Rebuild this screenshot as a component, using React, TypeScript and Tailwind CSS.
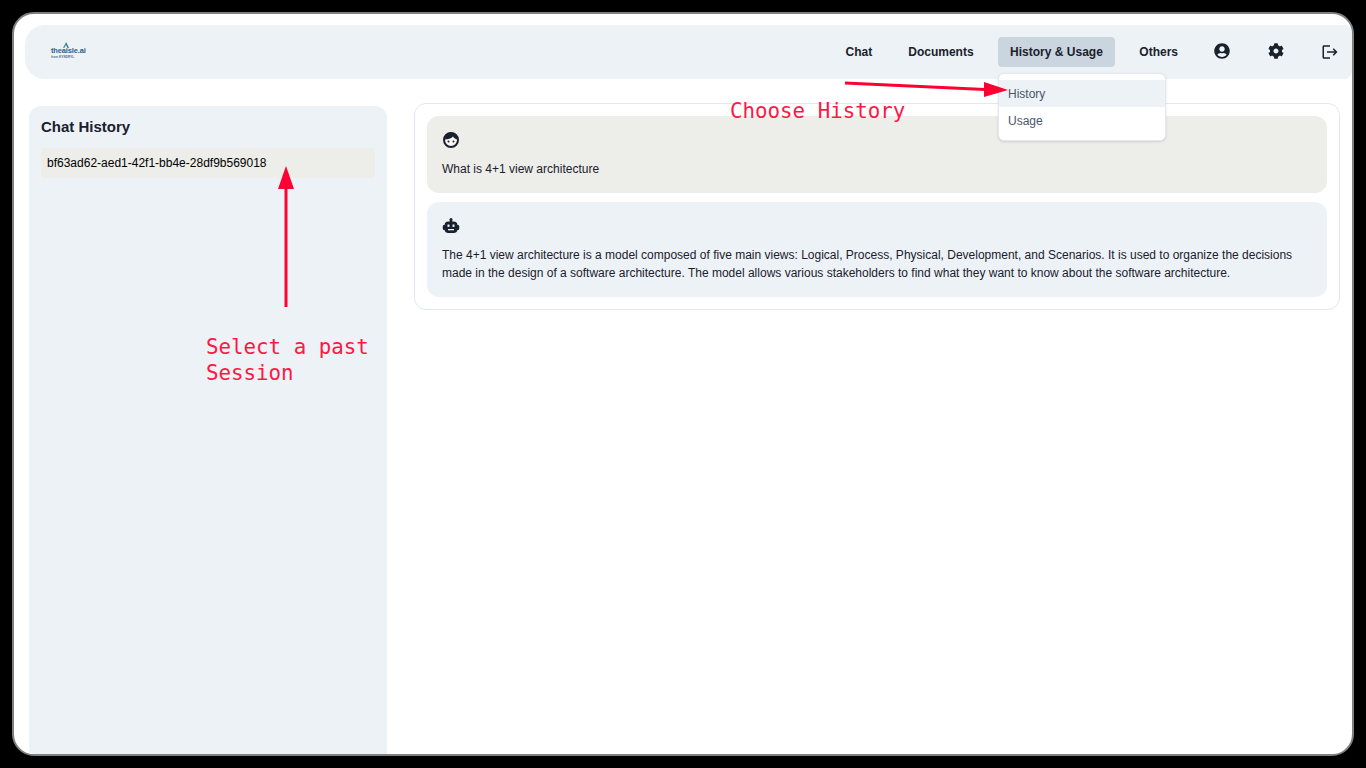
import { FaCog, FaUserCircle } from "react-icons/fa";
import { MdLogout } from "react-icons/md";

const navItems = ["Chat", "Documents", "History & Usage", "Others"];

// Red arrows and notes drawn over the screenshot
function Annotations() {
  return (
    <>
      <svg className="absolute left-0 top-0 z-20 pointer-events-none" width="1366" height="768">
        <line x1="845" y1="83" x2="985" y2="89.5" stroke="#ff0033" strokeWidth="3" />
        <polygon points="984,82 1008,90 984,97" fill="#ff0033" />
        <line x1="286" y1="307" x2="286" y2="188" stroke="#ff0033" strokeWidth="3" />
        <polygon points="286,166 278,189 294,189" fill="#ff0033" />
      </svg>
      <div className="absolute left-[730px] top-[98px] z-20 text-[20.8px] leading-[26px] text-[#ff1744] font-['DejaVu_Sans_Mono',monospace] whitespace-nowrap">
        Choose History
      </div>
      <div className="absolute left-[206px] top-[334px] z-20 text-[20.8px] leading-[26px] text-[#ff1744] font-['DejaVu_Sans_Mono',monospace] whitespace-nowrap">
        Select a past
        <br />
        Session
      </div>
    </>
  );
}

function Logo() {
  return (
    <div className="ml-[26px] mt-[2px] flex w-[36px] flex-col items-start">
      <div className="relative whitespace-nowrap text-[7.5px] font-bold leading-[8px] tracking-[-0.15px] text-[#2d5f8f]">
        <svg className="absolute left-[12px] -top-[5px]" width="6" height="6" viewBox="0 0 6 6">
          <path d="M3 0L6 6H4.6L3 3Z" fill="#2a6fa8" />
          <path d="M3 0L0 6H1.4L3 3Z" fill="#3f9f7a" />
        </svg>
        theaisle.ai
      </div>
      <div className="whitespace-nowrap text-[3.2px] font-bold leading-[5px] text-[#4f7396]">from KYNDRYL</div>
    </div>
  );
}

function FaceIcon() {
  return (
    <svg width="18" height="18" viewBox="0 0 18 18" className="block">
      <circle cx="9" cy="9" r="7" fill="#f7f7f4" stroke="#1a202c" strokeWidth="2" />
      <path d="M2.5 8.5C3 4 6 1.5 9 1.5s6 2.5 6.5 7C13 8 11.5 6.5 11 5.5 9.5 7.5 6 8.5 2.5 8.5Z" fill="#1a202c" />
      <circle cx="6.5" cy="10.5" r="1" fill="#1a202c" />
      <circle cx="11.5" cy="10.5" r="1" fill="#1a202c" />
    </svg>
  );
}

function BotIcon() {
  return (
    <svg width="18" height="18" viewBox="0 0 18 18" className="block">
      <circle cx="9" cy="2.5" r="1.5" fill="#1a202c" />
      <rect x="7.8" y="3" width="2.4" height="2" fill="#1a202c" />
      <rect x="2.5" y="4.5" width="13" height="11.5" rx="4" fill="#1a202c" />
      <rect x="0.8" y="8" width="2.5" height="5" rx="1.2" fill="#1a202c" />
      <rect x="14.7" y="8" width="2.5" height="5" rx="1.2" fill="#1a202c" />
      <rect x="5.5" y="7.5" width="2" height="2.4" fill="#edf2f7" />
      <rect x="10.5" y="7.5" width="2" height="2.4" fill="#edf2f7" />
      <rect x="6" y="12" width="6" height="1.3" fill="#edf2f7" />
    </svg>
  );
}

export default function App() {
  return (
    <div className="relative h-screen w-full overflow-hidden bg-black p-3 font-['Liberation_Sans',Arial,sans-serif] text-[#1a202c]">
      <div className="flex h-full flex-col overflow-hidden rounded-[22px] border-2 border-[#808080] bg-white pl-[11px] pt-[11px]">
        {/* Top bar */}
        <header className="flex h-[54px] shrink-0 items-center justify-between rounded-l-[20px] rounded-r-[8px] bg-[#edf2f7] pr-px">
          <Logo />
          <nav className="flex items-center gap-3">
            {navItems.map((item) => (
              <div
                key={item}
                className={`flex h-[30px] items-center rounded-[4px] text-xs font-bold ${
                  item === "History & Usage" ? "bg-[#cbd5e0] px-[12.5px]" : "px-3"
                }`}
              >
                {item}
              </div>
            ))}
            <div className="flex h-[30px] w-[41px] items-center justify-center pr-px">
              <FaUserCircle size={16} className="-mt-[2px]" />
            </div>
            <div className="flex h-[30px] w-[42px] items-center justify-center">
              <FaCog size={16} className="-mt-[2px]" />
            </div>
            <div className="flex h-[30px] w-[42px] items-center justify-center">
              <MdLogout size={18} />
            </div>
          </nav>
        </header>

        <div className="flex min-h-0 flex-1">
          {/* Sidebar */}
          <aside className="ml-1 mt-[27px] w-[358px] shrink-0 rounded-t-xl bg-[#edf2f7] px-3 pt-3">
            <h2 className="text-[15px] font-bold leading-[18px]">Chat History</h2>
            <div className="mt-3 flex h-[30px] items-center rounded-[4px] bg-[#edede9] px-[6px] text-xs text-black">
              bf63ad62-aed1-42f1-bb4e-28df9b569018
            </div>
          </aside>

          {/* Conversation */}
          <main className="ml-[27px] mt-6 h-fit w-[926px] rounded-xl border border-[#e2e8f0] p-3 text-xs">
            <div className="rounded-xl bg-[#edede9] p-[15px]">
              <FaceIcon />
              <p className="mt-[11px] leading-[18px]">What is 4+1 view architecture</p>
            </div>
            <div className="mt-[9px] rounded-xl bg-[#edf2f7] p-[15px]">
              <BotIcon />
              <p className="mt-[11px] leading-[18px]">
                The 4+1 view architecture is a model composed of five main views: Logical, Process, Physical,
                Development, and Scenarios. It is used to organize the decisions made in the design of a software
                architecture. The model allows various stakeholders to find what they want to know about the software
                architecture.
              </p>
            </div>
          </main>
        </div>
      </div>

      {/* Open menu */}
      <div className="absolute left-[998px] top-[73px] z-10 w-[168px] rounded-md border border-[#e2e8f0] bg-white py-[6px] text-xs text-[#4a5568] shadow-sm">
        <div className="flex h-[27px] items-center bg-[#edf2f7] px-[9px]">History</div>
        <div className="flex h-[27px] items-center px-[9px]">Usage</div>
      </div>

      <Annotations />
    </div>
  );
}
